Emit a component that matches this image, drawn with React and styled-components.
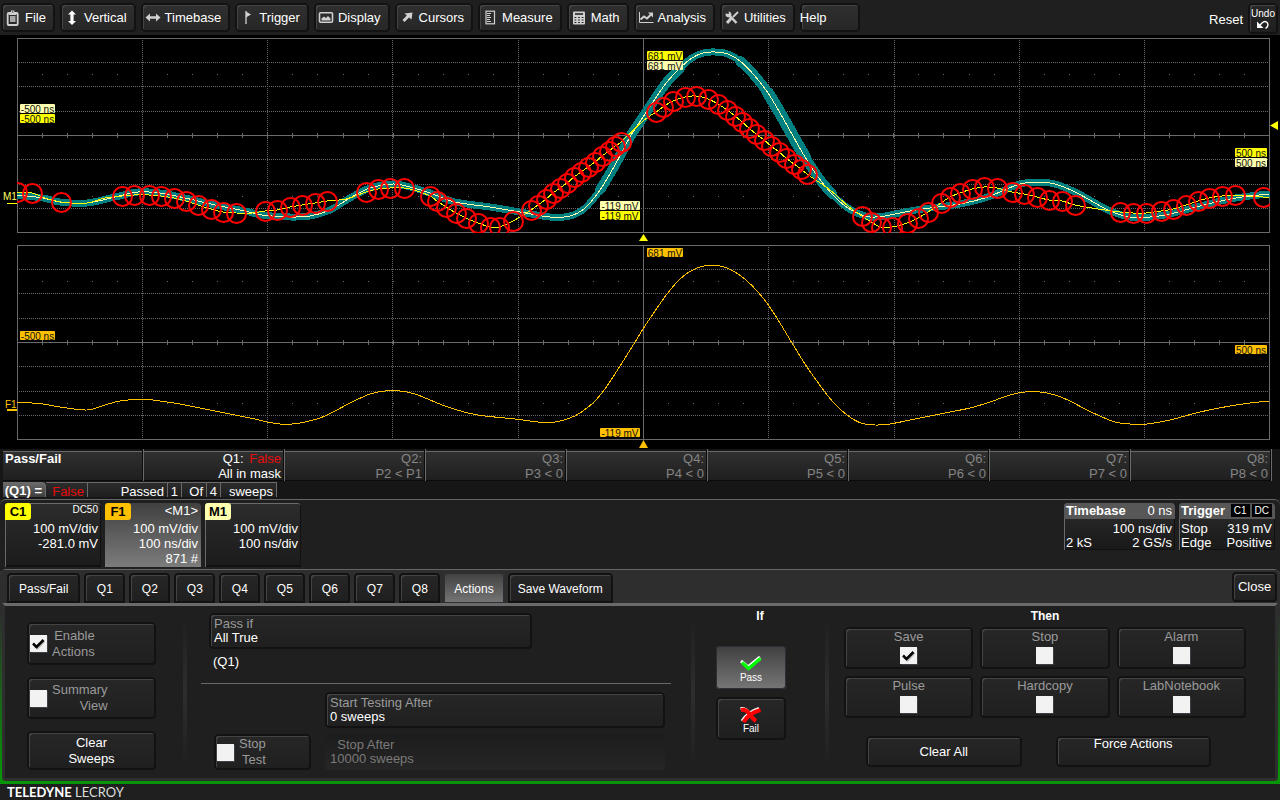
import React from "react";
import styled, { createGlobalStyle, css } from "styled-components";

/* ---------- trace data ---------- */

const MASK = [
  [17, 195], [43, 198], [60, 202], [87, 203], [115, 197], [138, 192], [160, 193],
  [185, 198], [215, 205], [245, 211], [262, 215], [290, 217], [310, 216], [330, 210],
  [350, 198], [370, 188], [393, 184], [410, 187], [430, 193], [455, 202], [490, 207],
  [520, 212], [550, 217], [570, 216], [585, 208], [600, 190], [615, 165], [630, 137],
  [643, 117], [655, 99], [667, 82], [680, 68], [692, 58], [703, 53], [715, 52],
  [728, 54], [740, 61], [754, 75], [768, 93], [780, 113], [793, 136], [805, 157],
  [818, 177], [832, 194], [845, 206], [857, 213], [870, 217], [885, 216], [910, 211],
  [930, 208], [960, 204], [985, 198], [1000, 192], [1020, 184], [1040, 182],
  [1055, 184], [1075, 192], [1095, 203], [1110, 211], [1130, 217], [1150, 217],
  [1170, 214], [1200, 206], [1230, 199], [1250, 196], [1269, 194],
];

const AVERAGE = [
  [17, 402], [43, 404], [60, 407], [87, 410], [105, 405], [120, 401], [142, 399],
  [160, 401], [180, 404], [205, 409], [230, 414], [255, 419], [267, 422], [280, 424],
  [292, 424], [305, 422], [320, 418], [335, 411], [350, 403], [370, 394], [385, 391],
  [400, 391], [415, 394], [430, 400], [445, 406], [468, 413], [485, 416], [515, 419],
  [538, 422], [555, 422], [570, 418], [580, 413], [593, 403], [605, 389], [620, 366],
  [632, 347], [643, 329], [655, 311], [667, 294], [678, 281], [689, 272], [700, 267],
  [712, 265], [724, 267], [735, 272], [746, 280], [758, 292], [769, 306], [780, 323],
  [792, 343], [805, 364], [819, 384], [833, 402], [847, 415], [861, 423], [875, 425],
  [890, 424], [915, 419], [930, 416], [950, 412], [970, 408], [990, 402], [1010, 395],
  [1025, 392], [1040, 392], [1055, 395], [1070, 401], [1085, 409], [1100, 416],
  [1115, 422], [1130, 424], [1147, 424], [1170, 420], [1200, 412], [1230, 406],
  [1250, 403], [1269, 401],
];

// Samples of C1 that fall outside the mask, in runs
const FAILS = [
  [[17, 192], [32, 193]],
  [[61, 202]],
  [[122, 196], [134, 195], [149, 195], [161, 196], [174, 198], [186, 201], [198, 205], [211, 209], [223, 212], [236, 213]],
  [[265, 211], [277, 210], [290, 207], [302, 205], [315, 203], [327, 201]],
  [[366, 192], [378, 189], [390, 188], [404, 188]],
  [[430, 196], [437, 201], [446, 207], [456, 213], [466, 218], [478, 223], [490, 227], [499, 227], [513, 221]],
  [[531, 210], [538, 205], [546, 199], [553, 193], [560, 188], [567, 183], [574, 177], [581, 172], [588, 167], [595, 162], [602, 156], [609, 151], [615, 146], [621, 142]],
  [[656, 112], [663, 107], [673, 101], [685, 97], [696, 96], [708, 99], [718, 104], [727, 110], [735, 116], [742, 122], [749, 128], [756, 134], [764, 140], [771, 146], [779, 152], [786, 158], [794, 164], [801, 169], [807, 174]],
  [[862, 216], [871, 222], [881, 227], [892, 227], [907, 223], [918, 218], [928, 212], [941, 203], [950, 197], [960, 193], [972, 189], [984, 187], [997, 188], [1012, 192], [1024, 194], [1037, 197], [1049, 200], [1062, 201], [1075, 205]],
  [[1120, 212], [1133, 213], [1146, 213], [1161, 211], [1173, 209], [1186, 205], [1198, 201], [1209, 198], [1222, 196], [1235, 195]],
  [[1263, 197]],
];

const BRIDGES = [
  [45, 198], [87, 203], [105, 198], [252, 213], [346, 199], [417, 191], [643, 121],
  [830, 190], [848, 206], [1098, 209], [1250, 196], [1269, 197],
];

const LIVE = [...FAILS.flat(), ...BRIDGES].sort((a, b) => a[0] - b[0]);

const smooth = (pts) =>
  pts.reduce((d, p, i) => {
    if (i === 0) return `M${p[0]} ${p[1]}`;
    const a = pts[i - 2] || pts[i - 1];
    const b = pts[i - 1];
    const n = pts[i + 1] || p;
    return `${d}C${b[0] + (p[0] - a[0]) / 6} ${b[1] + (p[1] - a[1]) / 6} ${
      p[0] - (n[0] - b[0]) / 6
    } ${p[1] - (n[1] - b[1]) / 6} ${p[0]} ${p[1]}`;
  }, "");

const between = (pts, from, to) => pts.filter(([x]) => x >= from && x <= to);

/* ---------- scope grids ---------- */

const GRID = "#6a6a6a";
const COLS = [142, 267, 392, 518, 768, 894, 1019, 1144];
const TICKS = Array.from({ length: 49 }, (_, i) => 17 + Math.round((i + 1) * 25.04));

const Graticule = ({ top }) => (
  <g fill="none" stroke={GRID} shapeRendering="crispEdges">
    <rect x="17.5" y={top + 0.5} width="1252" height="194" />
    {[24, 48, 73, 121, 146, 170].map((y) => (
      <path key={y} d={`M19 ${top + y + 0.5}H1269`} strokeDasharray="1 1" />
    ))}
    {COLS.map((x) => (
      <path key={x} d={`M${x + 0.5} ${top + 2}V${top + 194}`} strokeDasharray="1 1" />
    ))}
    <path d={`M17 ${top + 97.5}H1269M643.5 ${top}V${top + 194}`} />
    {TICKS.map((x) => (
      <path
        key={x}
        d={`M${x + 0.5} ${top + 95}v5M${x} ${top + 36.5}h1M${x} ${top + 158.5}h1`}
      />
    ))}
  </g>
);

const Tag = ({ x, y, w, color, children }) => (
  <g>
    <rect x={x} y={y} width={w} height="9" rx="1" fill={color} />
    <text x={x + w / 2} y={y + 9} textAnchor="middle" fontSize="10" fill="#111">
      {children}
    </text>
  </g>
);

const Scope = () => (
  <ScopeStyled viewBox="0 35 1280 414" role="img" aria-label="Waveform grids">
    <clipPath id="grid-top">
      <rect x="17" y="38" width="1253" height="195" />
    </clipPath>
    <Graticule top={38} />
    <g clipPath="url(#grid-top)" fill="none">
      <g stroke="#008080" strokeLinecap="round" shapeRendering="crispEdges">
        <path d={smooth(MASK)} strokeWidth="7" />
        <path d={smooth(between(MASK, 595, 685))} strokeWidth="10" />
        <path d={smooth(between(MASK, 735, 835))} strokeWidth="10" />
        <path d={smooth(between(MASK, 765, 810))} strokeWidth="12" />
      </g>
      <path d={smooth(MASK)} stroke="#ffffb0" shapeRendering="crispEdges" />
      <path d={smooth(LIVE)} stroke="#ffff00" shapeRendering="crispEdges" />
      {FAILS.flat().map(([x, y]) => (
        <circle key={x} cx={x + 0.5} cy={y + 0.5} r="9.5" stroke="#ff0000" strokeWidth="2" />
      ))}
    </g>
    <Tag x={647} y={51} w={36} color="#ffff00">681 mV</Tag>
    <Tag x={647} y={61} w={36} color="#ffffb0">681 mV</Tag>
    <Tag x={20} y={104} w={35} color="#ffffb0">-500 ns</Tag>
    <Tag x={20} y={114} w={35} color="#ffff00">-500 ns</Tag>
    <Tag x={600} y={201} w={40} color="#ffffb0">-119 mV</Tag>
    <Tag x={600} y={211} w={40} color="#ffff00">-119 mV</Tag>
    <Tag x={1235} y={148} w={32} color="#ffff00">500 ns</Tag>
    <Tag x={1235} y={158} w={32} color="#ffffb0">500 ns</Tag>
    <text x="3" y="200" fontSize="10" fill="#ffff60">M1</text>
    <path d="M7 203.5H17" stroke="#ffff00" shapeRendering="crispEdges" />
    <path d="M643.5 234L648 241H639Z" fill="#ffff00" />
    <path d="M1270 125.5L1278 121V130Z" fill="#ffff00" />

    <Graticule top={245} />
    <path d={smooth(AVERAGE)} fill="none" stroke="#ffc000" shapeRendering="crispEdges" />
    <Tag x={647} y={248} w={36} color="#ffc000">681 mV</Tag>
    <Tag x={20} y={331} w={35} color="#ffc000">-500 ns</Tag>
    <Tag x={600} y={428} w={40} color="#ffc000">-119 mV</Tag>
    <Tag x={1235} y={345} w={32} color="#ffc000">500 ns</Tag>
    <text x="5" y="408" fontSize="10" fill="#ffc000">F1</text>
    <path d="M7 410H17" stroke="#ffc000" strokeWidth="2" shapeRendering="crispEdges" />
    <path d="M643.5 440L648 448H639Z" fill="#ffc000" />
  </ScopeStyled>
);

/* ---------- icons ---------- */

const Icon = ({ children }) => (
  <svg width="16" height="16" viewBox="0 0 16 16" fill="none" stroke="#d0d0d0" aria-hidden="true">
    {children}
  </svg>
);

const icons = {
  File: (
    <>
      <rect x="2.7" y="3" width="10" height="12" rx="1" strokeWidth="1.8" />
      <path d="M4 5V2.5H6V0.5H9.4V2.5H11.4V5Z" fill="#d0d0d0" stroke="none" />
      <path d="M7 2h1.4" stroke="#222" />
      <path d="M5 7h5.5M5 9h5.5M5 11h5.5" strokeWidth="1.4" />
    </>
  ),
  Vertical: (
    <path d="M8 0.5L12 4.5H9.6V11H12L8 15L4 11H6.400V4.5H4Z" fill="#fff" stroke="none" />
  ),
  Timebase: (
    <path d="M0.5 7.5L5 3.500V6.300H11V3.500L15.500 7.5L11 11.500V8.700H5V11.500Z" fill="#d0d0d0" stroke="none" />
  ),
  Trigger: (
    <>
      <path d="M7 1V14" strokeWidth="1.5" stroke="#bbb" />
      <path d="M7 1.500L12 4.500L7 7.500Z" fill="#d0d0d0" stroke="none" />
    </>
  ),
  Display: (
    <>
      <rect x="1.5" y="2.7" width="13" height="9.6" rx="1" strokeWidth="1.6" />
      <path d="M3.500 10.500V8.500L6 6.500L8 8L10 6L12.500 8.500V10.500Z" fill="#d0d0d0" stroke="none" />
    </>
  ),
  Cursors: (
    <path d="M13.500 2.500L12.500 9.500L10 7.500L5.500 12L3.500 10L7.800 5.500L5.500 3.500Z" fill="#d0d0d0" stroke="none" />
  ),
  Measure: (
    <>
      <rect x="4" y="1.2" width="8.5" height="12.6" strokeWidth="1.2" />
      <path d="M5 3.500h4M5 5.500h3M5 7.500h4M5 9.500h3M5 11.500h4" />
    </>
  ),
  Math: (
    <>
      <rect x="2" y="1.5" width="12" height="13" rx="1" fill="#d0d0d0" stroke="none" />
      <path d="M4 4h8" stroke="#222" strokeWidth="1.600" />
      <path d="M3.500 7.500h9M3.500 10h9M3.500 12.500h9" stroke="#222" strokeWidth="1.2" strokeDasharray="1.800 1.800" />
    </>
  ),
  Analysis: (
    <>
      <path d="M1.5 2V12.500H15.500" />
      <path d="M2.500 9.500L6 6.500L9 8.500L13 4.500" strokeWidth="2" />
      <path d="M10 2.500H15V7.500Z" fill="#d0d0d0" stroke="none" />
    </>
  ),
  Utilities: (
    <>
      <path d="M4.500 4.500L12.500 13" strokeWidth="2.500" />
      <path d="M1.500 3.500A3.300 3.300 0 0 0 7 6.500A3.300 3.300 0 0 0 4.500 1.500L5 4Z" fill="#d0d0d0" stroke="none" />
      <path d="M14 2L9 7" strokeWidth="1.800" />
      <path d="M7.500 8L3 13" strokeWidth="3" />
    </>
  ),
};

const UndoIcon = () => (
  <svg width="14" height="10" viewBox="0 0 14 10" fill="none" stroke="#fff" aria-hidden="true">
    <path d="M4 5L6 3Q9 0 11.5 3Q13 6 9.500 8.500" strokeWidth="1.400" />
    <path d="M1 1.500V8H7.500Z" fill="#fff" stroke="none" />
  </svg>
);

const PassIcon = () => (
  <svg width="24" height="16" viewBox="0 0 24 16" fill="none" aria-hidden="true">
    <path d="M2 5L9 11L21 1" stroke="#fff" strokeWidth="3" />
    <path d="M3 6.500L9.500 12.500L21.500 2.500" stroke="#00ff00" strokeWidth="3.500" />
  </svg>
);

const FailIcon = () => (
  <svg width="24" height="16" viewBox="0 0 24 16" fill="none" aria-hidden="true">
    <path d="M1.500 1.500Q7 1 10 6T16 13M3 14Q9 5 20 1.500" stroke="#fff" strokeWidth="3" />
    <path d="M2 3Q7 2 10.500 7T17 14M4.500 15Q10 6 21.500 3" stroke="#ff0000" strokeWidth="4" />
  </svg>
);

/* ---------- controls ---------- */

const Tick = ({ label, column, checked, height }) => (
  <TickStyled $column={column} $height={height}>
    {column && <span>{label}</span>}
    <span className="box">
      <input type="checkbox" aria-label={label} defaultChecked={checked} />
      <svg width="17" height="17" viewBox="0 0 17 17" fill="none" aria-hidden="true">
        <path d="M4 10L7.500 13.500L14.500 6" stroke="#bbb" strokeWidth="2" />
        <path d="M3 8.500L6.500 12L13.500 5" stroke="#000" strokeWidth="2.500" />
      </svg>
    </span>
    {!column && <span className="text">{label}</span>}
  </TickStyled>
);

const Field = ({ id, label, value, disabled, className }) => (
  <FieldStyled className={className} $disabled={disabled}>
    <label htmlFor={id}>{label}</label>
    <input id={id} defaultValue={value} disabled={disabled} />
  </FieldStyled>
);

const QUERIES = ["P2 < P1", "P3 < 0", "P4 < 0", "P5 < 0", "P6 < 0", "P7 < 0", "P8 < 0"];
const TABS = ["Pass/Fail", "Q1", "Q2", "Q3", "Q4", "Q5", "Q6", "Q7", "Q8", "Actions", "Save Waveform"];
const ACTIONS = ["Save", "Stop", "Alarm", "Pulse", "Hardcopy", "LabNotebook"];

const App = () => {
  return (
    <AppStyled>
      <GlobalStyle />
      <MenuBar>
        {Object.keys(icons).map((name) => (
          <MenuButton key={name}>
            <Icon>{icons[name]}</Icon>
            {name}
          </MenuButton>
        ))}
        <HelpButton>Help</HelpButton>
        <span className="reset">Reset</span>
        <UndoButton>
          Undo
          <UndoIcon />
        </UndoButton>
      </MenuBar>

      <Scope />

      <Results>
        <ResultGrid>
          <ResultCell $left>
            <b>Pass/Fail</b>
          </ResultCell>
          <ResultCell $active>
            <span>
              Q1: <Failed>False</Failed>
            </span>
            <span>All in mask</span>
          </ResultCell>
          {QUERIES.map((query, i) => (
            <ResultCell key={query}>
              <span>Q{i + 2}:</span>
              <span>{query}</span>
            </ResultCell>
          ))}
        </ResultGrid>
        <Summary>
          <SummaryCell $width={43} $title>(Q1) =</SummaryCell>
          <SummaryCell $width={42}>
            <Failed>False</Failed>
          </SummaryCell>
          <SummaryCell $width={80}>Passed</SummaryCell>
          <SummaryCell $width={14}>1</SummaryCell>
          <SummaryCell $width={25}>Of</SummaryCell>
          <SummaryCell $width={14}>4</SummaryCell>
          <SummaryCell $width={56}>sweeps</SummaryCell>
        </Summary>
      </Results>

      <Descriptors>
        <Trace $color="#ffff00">
          <b>C1</b>
          <small>DC50</small>
          <p>100 mV/div</p>
          <p>-281.0 mV</p>
        </Trace>
        <Trace $color="#ffc000" $selected>
          <b>F1</b>
          <span>&lt;M1&gt;</span>
          <p>100 mV/div</p>
          <p>100 ns/div</p>
          <p>871 #</p>
        </Trace>
        <Trace $color="#ffffb0">
          <b>M1</b>
          <span />
          <p>100 mV/div</p>
          <p>100 ns/div</p>
        </Trace>
        <Setup $width={111} $push>
          <header>
            <b>Timebase</b>
            <span>0 ns</span>
          </header>
          <p>
            <span />
            <span>100 ns/div</span>
          </p>
          <p>
            <span>2 kS</span>
            <span>2 GS/s</span>
          </p>
        </Setup>
        <Setup $width={96}>
          <header>
            <b>Trigger</b>
            <span className="chips">
              <small>C1</small>
              <small>DC</small>
            </span>
          </header>
          <p>
            <span>Stop</span>
            <span>319 mV</span>
          </p>
          <p>
            <span>Edge</span>
            <span>Positive</span>
          </p>
        </Setup>
      </Descriptors>

      <Dialog>
        <TabBar>
          <div role="tablist">
            {TABS.map((tab) => (
              <Tab key={tab} role="tab" aria-selected={tab === "Actions"} $selected={tab === "Actions"}>
                {tab}
              </Tab>
            ))}
          </div>
          <CloseButton>Close</CloseButton>
        </TabBar>
        <Page>
          <Side>
            <Tick label={"Enable\nActions"} checked height={43} />
            <Tick label={"Summary\nView"} height={42} />
            <PushButton $height={39}>
              Clear
              <br />
              Sweeps
            </PushButton>
          </Side>
          <Divider />
          <Conditions>
            <FieldStyled className="rule">
              <label htmlFor="pass-if">Pass if</label>
              <select id="pass-if" defaultValue="All True">
                <option>All True</option>
              </select>
            </FieldStyled>
            <p>(Q1)</p>
            <hr />
            <Testing>
              <Field className="start" id="start-after" label="Start Testing After" value="0 sweeps" />
              <Tick label={"Stop\nTest"} height={36} />
              <Field id="stop-after" label={"\u00a0\u00a0Stop After"} value="10000 sweeps" disabled />
            </Testing>
          </Conditions>
          <Divider />
          <Verdict>
            <h2>If</h2>
            <VerdictButton $selected>
              <PassIcon />
              Pass
            </VerdictButton>
            <VerdictButton>
              <FailIcon />
              Fail
            </VerdictButton>
          </Verdict>
          <Divider />
          <Outcome>
            <h2>Then</h2>
            <ActionGrid>
              {ACTIONS.map((name) => (
                <Tick key={name} column label={name} checked={name === "Save"} height={42} />
              ))}
            </ActionGrid>
            <OutcomeButtons>
              <PushButton $height={31}>Clear All</PushButton>
              <PushButton $height={31} $top>Force Actions</PushButton>
            </OutcomeButtons>
          </Outcome>
        </Page>
      </Dialog>
      <Footer>
        <b>TELEDYNE</b> LECROY
      </Footer>
    </AppStyled>
  );
};

/* ---------- styles ---------- */

const GlobalStyle = createGlobalStyle`
  * {
    box-sizing: border-box;
    margin: 0;
  }
  body {
    background: #1f1f1f;
  }
  button, input, select {
    font: inherit;
    color: inherit;
    border: 0;
    padding: 0;
    background: none;
  }
`;

const AppStyled = styled.div`
  min-height: 100vh;
  background: #1f1f1f;
  color: #fff;
  font-family: "Liberation Sans", Arial, sans-serif;
  font-size: 13px;
  line-height: 16px;
`;

const raised = css`
  border-radius: 4px;
  background: linear-gradient(#272727, #1f1f1f);
  box-shadow: inset 0 0 0 2px #121212, inset 3px 3px 0 #444;
`;

const lit = css`
  border-radius: 4px;
  background: linear-gradient(#404040, #767676);
  box-shadow: inset 0 0 0 1px #2b3036;
`;

const MenuBar = styled.nav`
  display: flex;
  gap: 5px;
  height: 35px;
  padding: 3px 2px 0 1px;

  .reset {
    margin: 9px 0 0 auto;
  }
`;

const MenuButton = styled.button`
  ${raised}
  display: flex;
  align-items: center;
  gap: 4px;
  height: 29px;
  padding: 0 9px 0 4px;
  background: linear-gradient(#303030, #262626);
`;

const HelpButton = styled(MenuButton)`
  min-width: 60px;
  padding: 0;
`;

const UndoButton = styled.button`
  ${raised}
  display: flex;
  flex-direction: column;
  align-items: center;
  width: 30px;
  height: 31px;
  padding-top: 5px;
  font-size: 10px;
  line-height: 12px;
`;

const ScopeStyled = styled.svg`
  display: block;
  width: 100%;
  background: #000;
`;

const Results = styled.section`
  height: 50px;
  padding: 0 8px 0 3px;
  background: #161616;
`;

const ResultGrid = styled.div`
  display: grid;
  grid-template-columns: repeat(9, 1fr);
  height: 32px;
`;

const ResultCell = styled.div`
  display: flex;
  flex-direction: column;
  padding: 2px 3px 0 2px;
  line-height: 15px;
  text-align: ${(p) => (p.$left ? "left" : "right")};
  color: ${(p) => (p.$left || p.$active ? "#fff" : "#858585")};
  border-right: 1px solid #6a6a6a;
  background: linear-gradient(#161616 2px, #6a6a6a 2px 3px, #303030 3px, #1e1e1e);
  box-shadow: inset -1px -1px 0 #0c0c0c;
`;

const Failed = styled.span`
  margin-left: 2px;
  color: #e80c0c;
`;

const Summary = styled.div`
  display: flex;
  height: 15px;
  margin-top: 1px;
`;

const SummaryCell = styled.div`
  width: ${(p) => p.$width}px;
  padding-right: 3px;
  line-height: 18px;
  text-align: right;
  white-space: nowrap;
  border-top: 1px solid #6a6a6a;
  border-right: 1px solid #6a6a6a;
  background: linear-gradient(#2c2c2c, #1e1e1e);
  ${(p) =>
    p.$title &&
    css`
      line-height: 16px;
      font-weight: 600;
      border-radius: 0 4px 0 0;
      background: linear-gradient(#6a6a6a, #3c3c3c);
    `}
`;

const Descriptors = styled.section`
  display: flex;
  align-items: flex-start;
  gap: 4px;
  height: 70px;
  padding: 3px 5px 0;
  border-top: 1px solid #666;
  border-radius: 6px 6px 0 0;
  background: #1f1f1f;
`;

const Trace = styled.button`
  display: grid;
  grid-template-columns: auto 1fr;
  grid-template-rows: 17px;
  grid-auto-rows: 15px;
  align-content: start;
  width: 96px;
  height: 64px;
  text-align: right;
  border-radius: 4px 4px 0 0;
  background: ${(p) =>
    p.$selected ? "linear-gradient(#404040, #7c7c7c)" : "linear-gradient(#2c2c2c, #1b1b1b)"};
  box-shadow: ${(p) => (p.$selected ? "none" : "inset 1px 1px 0 #6a6a6a, inset -1px -2px 0 #111")};

  b {
    width: 26px;
    line-height: 17px;
    text-align: center;
    color: #000;
    border-radius: 3px 3px 3px 0;
    background: ${(p) => p.$color};
  }
  small {
    font-size: 10px;
    line-height: 14px;
    padding-right: 3px;
  }
  span {
    padding-right: 3px;
  }
  p {
    grid-column: 1 / -1;
    padding-right: 3px;
    line-height: 17px;
  }
`;

const Setup = styled.div`
  width: ${(p) => p.$width}px;
  margin-left: ${(p) => (p.$push ? "auto" : 0)};
  height: 47px;
  border-radius: 4px 4px 0 0;
  background: linear-gradient(#2c2c2c, #191919);
  box-shadow: inset 1px 0 0 #6a6a6a, inset -1px -1px 0 #111;

  header,
  p {
    display: flex;
    justify-content: space-between;
    padding: 0 3px 0 2px;
    line-height: 14px;
  }
  header {
    height: 16px;
    margin-bottom: 3px;
    line-height: 16px;
    border-radius: 4px 4px 0 0;
    background: #575757;
  }
  .chips {
    display: flex;
    gap: 2px;
  }
  small {
    height: 13px;
    margin-top: 1px;
    padding: 0 3px;
    font-size: 10px;
    line-height: 13px;
    background: #000;
  }
`;

const Dialog = styled.section`
  padding: 0 2px 3px;
  border-radius: 6px 6px 0 0;
  border-top: 1px solid #666;
  background: linear-gradient(#2e2e2e 20%, #089408 96%);
`;

const TabBar = styled.div`
  display: flex;
  justify-content: space-between;
  align-items: flex-end;
  height: 33px;
  padding: 0 1px 0 5px;
  background: #2e2e2e;

  [role="tablist"] {
    display: flex;
    gap: 4px;
  }
`;

const Tab = styled.button`
  ${(p) => (p.$selected ? lit : raised)}
  min-width: 41px;
  height: 30px;
  padding: 2px 10px 0;
  border-radius: 4px 4px 0 0;
  font-size: 12px;

  &:first-child {
    padding: 2px 12px 0;
  }
`;

const CloseButton = styled.button`
  ${raised}
  width: 45px;
  height: 30px;
  margin-bottom: 1px;
`;

const Page = styled.div`
  display: grid;
  grid-template-columns: 178fr 4px 504fr 4px 130fr 4px 446fr;
  height: 178px;
  border: 3px solid #2e2e2e;
  border-top-color: #6a6a6a;
  border-radius: 0 0 4px 4px;
  background: #1f1f1f;

  h2 {
    padding-top: 3px;
    font-size: 12px;
    line-height: 14px;
    text-align: center;
  }
`;

const Divider = styled.div`
  margin: 12px 0;
  background: linear-gradient(transparent, #2e2e2e 50%, transparent);
`;

const Side = styled.div`
  display: flex;
  flex-direction: column;
  gap: 12px;
  padding: 16px 27px 0 22px;
`;

const TickStyled = styled.label`
  ${raised}
  display: flex;
  flex-direction: ${(p) => (p.$column ? "column" : "row")};
  align-items: center;
  gap: ${(p) => (p.$column ? "3px" : "5px")};
  height: ${(p) => p.$height}px;
  padding: ${(p) => (p.$column ? "3px 0 0" : "0 0 0 3px")};
  line-height: ${(p) => (p.$column ? "14px" : "16px")};
  color: #9a9a9a;

  .text {
    text-align: right;
    white-space: pre-line;
  }
  .box {
    display: grid;
  }
  input,
  svg {
    grid-area: 1 / 1;
  }
  input {
    appearance: none;
    width: 17px;
    height: 17px;
    background: #f2f2f2;
    box-shadow: 1px 1px 0 #3b4047;
  }
  svg {
    visibility: hidden;
    pointer-events: none;
  }
  input:checked + svg {
    visibility: visible;
  }
`;

const PushButton = styled.button`
  ${raised}
  display: flex;
  flex-direction: column;
  justify-content: ${(p) => (p.$top ? "flex-start" : "center")};
  align-items: center;
  height: ${(p) => p.$height}px;
`;

const FieldStyled = styled.div`
  ${raised}
  display: flex;
  flex-direction: column;
  height: 36px;
  padding: 4px 5px 0;
  line-height: 14px;
  ${(p) =>
    p.$disabled &&
    css`
      color: #7a7a7a;
      background: linear-gradient(#1c1c1c, #262626);
      box-shadow: none;
    `}

  label {
    color: ${(p) => (p.$disabled ? "#7a7a7a" : "#9a9a9a")};
  }
  input,
  select {
    appearance: none;
    height: 14px;
    outline: none;
  }
`;

const Conditions = styled.div`
  padding-top: 7px;

  .rule {
    width: 323px;
    margin-left: 22px;
  }
  p {
    margin: 5px 0 0 26px;
  }
  hr {
    margin: 13px 20px 8px 14px;
    border: 0;
    border-top: 1px solid #6a6a6a;
  }
`;

const Testing = styled.div`
  display: grid;
  grid-template-columns: 97px 1fr;
  gap: 6px 14px;
  margin: 0 26px 0 27px;

  .start {
    grid-column: 2;
  }
`;

const Verdict = styled.div`
  display: flex;
  flex-direction: column;

  h2 {
    margin-bottom: 23px;
  }
`;

const VerdictButton = styled.button`
  ${(p) => (p.$selected ? lit : raised)}
  display: flex;
  flex-direction: column;
  align-items: center;
  width: 70px;
  height: 43px;
  margin: 0 0 8px 21px;
  padding-top: 10px;
  font-size: 10px;
  line-height: 12px;
`;

const Outcome = styled.div`
  padding: 0 29px 0 15px;

  h2 {
    margin-bottom: 4px;
  }
`;

const ActionGrid = styled.div`
  display: grid;
  grid-template-columns: repeat(3, 1fr);
  gap: 7px;
`;

const OutcomeButtons = styled.div`
  display: grid;
  grid-template-columns: 1fr 1fr;
  gap: 34px;
  padding: 18px 35px 0 22px;
`;

const Footer = styled.footer`
  padding-left: 7px;
  font-family: Lato, "Liberation Sans", sans-serif;
  font-size: 13px;
  color: #ddd;

  b {
    color: #fff;
  }
`;

export default App;
